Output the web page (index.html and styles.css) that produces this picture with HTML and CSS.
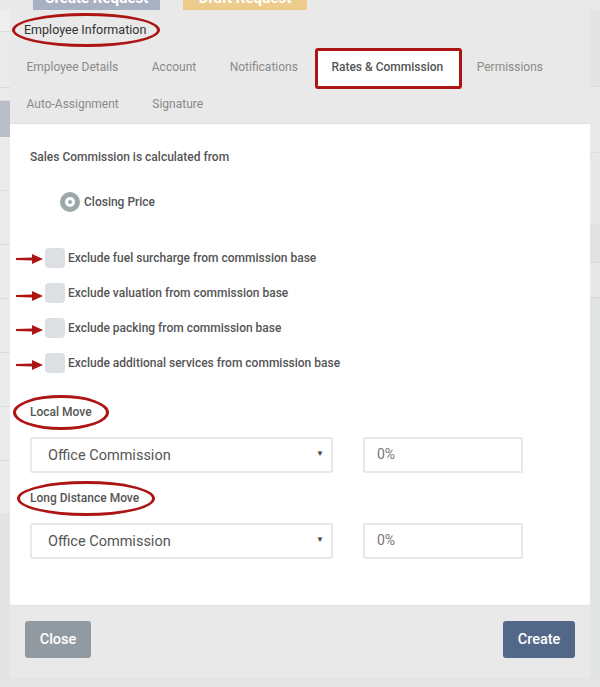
FILE: index.html
```html
<!DOCTYPE html>
<html lang="en">
<head>
    <meta charset="UTF-8">
    <meta name="viewport" content="width=device-width, initial-scale=1.0">
    <title>Employee Information</title>
    <link rel="stylesheet" href="styles.css">
</head>
<body>
    <div class="page">
        <div class="top-bar">
            <span class="page-btn btn-create-request">Create Request</span>
            <span class="page-btn btn-draft-request">Draft Request</span>
        </div>

        <div class="layout">
            <div class="side side-left">
                <div class="strip strip-a"></div>
                <div class="strip strip-b"></div>
                <div class="strip strip-c"></div>
                <div class="strip strip-dark"></div>
                <div class="strip strip-row"></div>
                <div class="strip strip-row"></div>
                <div class="strip strip-row"></div>
                <div class="strip strip-row"></div>
                <div class="strip strip-row"></div>
                <div class="strip strip-row"></div>
                <div class="strip strip-row"></div>
                <div class="strip strip-end"></div>
            </div>

            <div class="modal">
                <div class="modal-header">
                    <div class="modal-title">Employee Information</div>
                    <ul class="tabs">
                        <li class="tab">Employee Details</li>
                        <li class="tab">Account</li>
                        <li class="tab">Notifications</li>
                        <li class="tab active">Rates &amp; Commission</li>
                        <li class="tab">Permissions</li>
                        <li class="tab">Auto-Assignment</li>
                        <li class="tab">Signature</li>
                    </ul>
                </div>

                <div class="modal-body">
                    <p class="field-title">Sales Commission is calculated from</p>

                    <label class="radio-row">
                        <span class="radio"></span>
                        <span>Closing Price</span>
                    </label>

                    <div class="checks">
                        <label class="check-row"><span class="checkbox"></span>Exclude fuel surcharge from commission base</label>
                        <label class="check-row"><span class="checkbox"></span>Exclude valuation from commission base</label>
                        <label class="check-row"><span class="checkbox"></span>Exclude packing from commission base</label>
                        <label class="check-row"><span class="checkbox"></span>Exclude additional services from commission base</label>
                    </div>

                    <p class="field-title section-title">Local Move</p>
                    <div class="field-row">
                        <div class="select-wrap">
                            <select class="select">
                                <option>Office Commission</option>
                            </select>
                        </div>
                        <input class="rate-input" type="text" value="0%">
                    </div>

                    <p class="field-title section-title">Long Distance Move</p>
                    <div class="field-row">
                        <div class="select-wrap">
                            <select class="select">
                                <option>Office Commission</option>
                            </select>
                        </div>
                        <input class="rate-input" type="text" value="0%">
                    </div>
                </div>

                <div class="modal-footer">
                    <button class="btn btn-close">Close</button>
                    <button class="btn btn-create">Create</button>
                </div>
            </div>

            <div class="side side-right">
                <div class="strip r-a"></div>
                <div class="strip r-b"></div>
                <div class="strip r-c"></div>
                <div class="strip r-d"></div>
                <div class="strip r-e"></div>
                <div class="strip r-f"></div>
                <div class="strip r-end"></div>
            </div>
        </div>

        <div class="bottom-bar"></div>

        <!-- annotations drawn on top of the screenshot -->
        <span class="mark-ellipse mark-title"></span>
        <span class="mark-rect"></span>
        <span class="mark-ellipse mark-local"></span>
        <span class="mark-ellipse mark-long"></span>

        <svg class="arrow arrow-1" width="28" height="12" viewBox="0 0 28 12"><path d="M0 5 L16 4.6 L16 1 L27 6 L16 11 L16 7.4 L0 7 Z" fill="#ad1414"/></svg>
        <svg class="arrow arrow-2" width="28" height="12" viewBox="0 0 28 12"><path d="M0 5 L16 4.6 L16 1 L27 6 L16 11 L16 7.4 L0 7 Z" fill="#ad1414"/></svg>
        <svg class="arrow arrow-3" width="28" height="12" viewBox="0 0 28 12"><path d="M0 5 L16 4.6 L16 1 L27 6 L16 11 L16 7.4 L0 7 Z" fill="#ad1414"/></svg>
        <svg class="arrow arrow-4" width="28" height="12" viewBox="0 0 28 12"><path d="M0 5 L16 4.6 L16 1 L27 6 L16 11 L16 7.4 L0 7 Z" fill="#ad1414"/></svg>
    </div>
</body>
</html>
```

FILE: styles.css
```css
body {
    margin: 0;
    padding: 0;
    font-family: Roboto, "Liberation Sans", Arial, sans-serif;
    background-color: #e4e5e4;
    color: #333;
    overflow: hidden;
}

.page {
    position: relative;
    width: 600px;
    height: 687px;
}

/* page behind the modal, only its lower edge shows */
.top-bar {
    height: 10px;
    overflow: hidden;
    background-color: #e9e9e9;
    display: flex;
    gap: 23px;
    padding-left: 33px;
}
.page-btn {
    display: block;
    height: 24px;
    margin-top: -14px;
    line-height: 24px;
    font-size: 15px;
    font-weight: 700;
    color: #fff;
    text-align: center;
}
.btn-create-request {
    width: 127px;
    background-color: #a8b1c1;
}
.btn-draft-request {
    width: 124px;
    background-color: #eccb8b;
}

.layout {
    display: flex;
}
.side {
    width: 10px;
    display: flex;
    flex-direction: column;
}
.strip {
    border-bottom: 1px solid #dcdcdc;
    background-color: #ebebeb;
}
.strip-a { height: 21px; background-color: #efefef; }
.strip-b { height: 55px; }
.strip-c { height: 12px; }
.strip-dark { height: 36px; background-color: #b9bec6; border-bottom: none; }
.strip-row { height: 53px; }
.strip-end { flex: 1; background-color: #e3e4e3; border-bottom: none; }

.r-a { height: 76px; background-color: #e4e4e4; }
.r-b { height: 65px; background-color: #e9e9e9; }
.r-c { height: 71px; background-color: #e8e8e8; border-bottom: none; }
.r-d { height: 38px; background-color: #e2e2e2; }
.r-e { height: 34px; background-color: #e8e8e8; border-bottom: none; }
.r-f { height: 1px; background-color: #d8d8d8; border-bottom: none; }
.r-end { flex: 1; background-color: #e2e3e3; border-bottom: none; }

.bottom-bar {
    height: 10px;
}

/* modal */
.modal {
    width: 580px;
    background-color: #e9e9e9;
}
.modal-title {
    height: 39px;
    line-height: 39px;
    padding-left: 14px;
    font-size: 12.5px;
    color: #333;
}
.tabs {
    list-style: none;
    margin: 0;
    padding: 0;
    display: flex;
    flex-wrap: wrap;
    width: 560px;
}
.tab {
    height: 37px;
    line-height: 37px;
    padding: 0 17px 0 16.5px;
    font-size: 12px;
    color: #8a8a8a;
}
.tab.active {
    background-color: #fff;
    color: #555;
    font-weight: 500;
}

.modal-body {
    background-color: #fff;
    border-top: 1px solid #dedede;
    padding: 26px 20px 46px;
}
.field-title {
    margin: 0;
    font-size: 12px;
    line-height: 14px;
    font-weight: 500;
    color: #555;
}
.radio-row {
    display: flex;
    align-items: center;
    gap: 4px;
    margin: 28px 0 0 30px;
    font-size: 12px;
    font-weight: 500;
    color: #555;
}
.radio {
    position: relative;
    width: 10px;
    height: 10px;
    border: 5px solid #9ca7a9;
    border-radius: 50%;
    background-color: #fff;
}
.radio::after {
    content: "";
    position: absolute;
    left: 3px;
    top: 3px;
    width: 4px;
    height: 4px;
    border-radius: 50%;
    background-color: #9ca7a9;
}

.checks {
    display: flex;
    flex-direction: column;
    gap: 15px;
    margin: 36px 0 0 15px;
}
.check-row {
    display: flex;
    align-items: center;
    gap: 3px;
    font-size: 12px;
    font-weight: 500;
    color: #555;
}
.checkbox {
    width: 20px;
    height: 20px;
    border-radius: 4px;
    background-color: #dce0e3;
}

.section-title {
    margin-top: 32px;
}
.field-row {
    display: flex;
    gap: 30px;
    margin-top: 18px;
}
.field-row + .section-title {
    margin-top: 18px;
}
.select-wrap {
    position: relative;
    width: 303px;
}
.select-wrap::after {
    content: "▼";
    position: absolute;
    right: 9px;
    top: 12px;
    font-size: 8px;
    color: #444;
    pointer-events: none;
}
.select {
    appearance: none;
    -webkit-appearance: none;
    width: 100%;
    height: 36px;
    padding: 0 16px;
    border: 2px solid #e6e8e9;
    border-radius: 2px;
    background-color: #fff;
    font-family: Roboto, "Liberation Sans", Arial, sans-serif;
    font-size: 14.5px;
    color: #555;
    box-sizing: border-box;
}
.rate-input {
    width: 160px;
    height: 36px;
    padding: 0 0 3px 12px;
    border: 2px solid #e6e8e9;
    border-radius: 2px;
    font-family: Roboto, "Liberation Sans", Arial, sans-serif;
    font-size: 14px;
    color: #777;
    box-sizing: border-box;
}

.modal-footer {
    display: flex;
    justify-content: space-between;
    padding: 15px 15px 20px;
    border-top: 1px solid #e2e2e2;
}
.btn {
    height: 37px;
    border: none;
    border-radius: 3px;
    padding: 0 14px;
    font-family: Roboto, "Liberation Sans", Arial, sans-serif;
    font-size: 14.5px;
    font-weight: 500;
    color: #fff;
}
.btn-close {
    width: 66px;
    background-color: #929aa1;
}
.btn-create {
    width: 72px;
    background-color: #536889;
}

/* red annotation marks */
.mark-ellipse {
    position: absolute;
    border: 3px solid #ad1414;
    border-radius: 50%;
    box-sizing: border-box;
}
.mark-title { left: 12px; top: 13px; width: 148px; height: 34px; }
.mark-local { left: 13px; top: 395px; width: 96px; height: 35px; }
.mark-long { left: 17px; top: 481px; width: 138px; height: 35px; }
.mark-rect {
    position: absolute;
    left: 315px;
    top: 48px;
    width: 147px;
    height: 41px;
    border: 3px solid #ad1414;
    border-radius: 3px;
    box-sizing: border-box;
}
.arrow {
    position: absolute;
    left: 16px;
}
.arrow-1 { top: 253px; }
.arrow-2 { top: 290px; }
.arrow-3 { top: 324px; }
.arrow-4 { top: 359px; }
```
